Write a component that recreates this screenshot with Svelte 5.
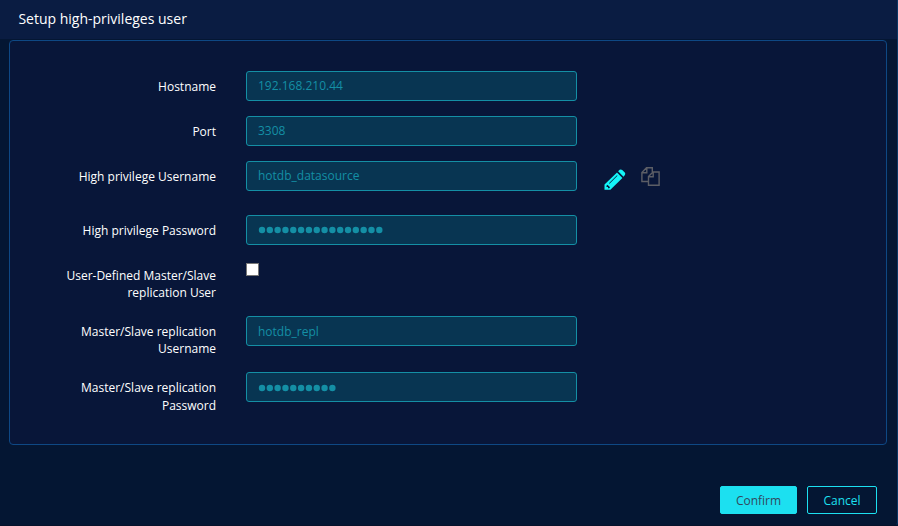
<script>
  const rows = [
    { label: 'Hostname', value: '192.168.210.44', height: 45 },
    { label: 'Port', value: '3308', height: 45 },
    { label: 'High privilege Username', value: 'hotdb_datasource', height: 54, tools: true },
    { label: 'High privilege Password', dots: 16, height: 45 },
    { label: 'User-Defined Master/Slave replication User', check: true, height: 56 },
    { label: 'Master/Slave replication Username', value: 'hotdb_repl', height: 56, low: true },
    { label: 'Master/Slave replication Password', dots: 10, height: 56, low: true, loose: true }
  ];
</script>

<div class="dialog">
  <header>Setup high-privileges user</header>
  <section class="panel">
    {#each rows as row}
      <div class="row" style="height: {row.height}px">
        <div class="label" class:loose={row.loose}>{row.label}</div>
        {#if row.check}
          <span class="check"></span>
        {:else}
          <div class="field" class:low={row.low}>
            {#if row.dots}
              <svg class="dots" width={row.dots * 8} height="8">
                {#each Array(row.dots) as _, i}
                  <circle cx={4 + i * 7.82} cy="4" r="3.2" />
                {/each}
              </svg>
            {:else}
              {row.value}
            {/if}
          </div>
        {/if}
        {#if row.tools}
          <svg class="pencil" width="22" height="22" viewBox="0 0 22 22">
            <path fill="#14f5f8" fill-rule="evenodd" d="M13 3.4 18.4 8.9 6.4 20.8H.5V15.4ZM14.1 2.3 15.6.8Q17 0 18.2 1L20.8 3.6Q21.8 4.8 20.9 6L19.5 7.7ZM3.4 15.8 2.5 16.8V18H4V19.3H5.1L6.1 18.3ZM13 6.2 5 14.2 5.5 14.7 13.5 6.7Z" />
          </svg>
          <svg class="copy" width="19" height="19" viewBox="0 0 19 19" fill="none" stroke="#5c5e66" stroke-width="1.4">
            <path d="M7.5 14.5H.9V5.5L5.5.8H11.3V5M5.8.8V5.8H.9M7.5 9.5 12 5H18.1V18.2H7.5ZM12.2 5V9.8H7.5" />
          </svg>
        {/if}
      </div>
    {/each}
  </section>
  <footer>
    <button class="confirm">Confirm</button>
    <button>Cancel</button>
  </footer>
</div>

<style>
  .dialog {
    box-sizing: border-box;
    width: 898px;
    height: 526px;
    background: #041633;
    border-right: 1px solid #0b3765;
    border-bottom: 1px solid #06122b;
    border-bottom-right-radius: 4px;
    font-family: "Open Sans", "Noto Sans", sans-serif;
    font-size: 12px;
    color: #fff;
    display: flex;
    flex-direction: column;
  }
  :global(body) { background: #041633; overflow: hidden; }
  header {
    height: 39px;
    line-height: 38px;
    padding-left: 18.4px;
    background: #0a1c42;
    font-size: 14px;
  }
  .panel {
    box-sizing: border-box;
    width: 878px;
    height: 405px;
    margin: 1px 0 0 9px;
    padding: 30px 0 0 35px;
    background: #081639;
    border: 1px solid #0e4884;
    border-radius: 4px;
  }
  .row { display: flex; align-items: flex-start; }
  .label {
    width: 171px;
    padding-top: 7px;
    margin-right: 30px;
    text-align: right;
    line-height: 17.14px;
  }
  .label.loose { line-height: 18px; }
  .field {
    box-sizing: border-box;
    display: flex;
    align-items: center;
    width: 331px;
    height: 30px;
    padding: 0 11px 2px;
    border: 1px solid #148fa5;
    border-radius: 3px;
    background: #083552;
    color: #148fa5;
  }
  .field.low { padding-bottom: 0; }
  .dots { fill: #148fa5; margin-top: 2px; }
  .check {
    box-sizing: border-box;
    width: 13px;
    height: 13px;
    margin-top: 3px;
    background: #fff;
    border: 1px solid #767676;
  }
  .pencil { margin: 8px 0 0 27px; }
  .copy { margin: 6px 0 0 15px; }
  footer {
    display: flex;
    justify-content: flex-end;
    gap: 10px;
    margin-top: 41px;
    padding-right: 20px;
  }
  button {
    box-sizing: border-box;
    width: 70px;
    height: 28px;
    padding: 0;
    border: 1px solid #1ce0f0;
    border-radius: 2px;
    background: transparent;
    color: #1ce0f0;
    font: 12px "Open Sans", sans-serif;
  }
  .confirm { width: 77px; background: #1ce0f0; color: #33475c; }
</style>
